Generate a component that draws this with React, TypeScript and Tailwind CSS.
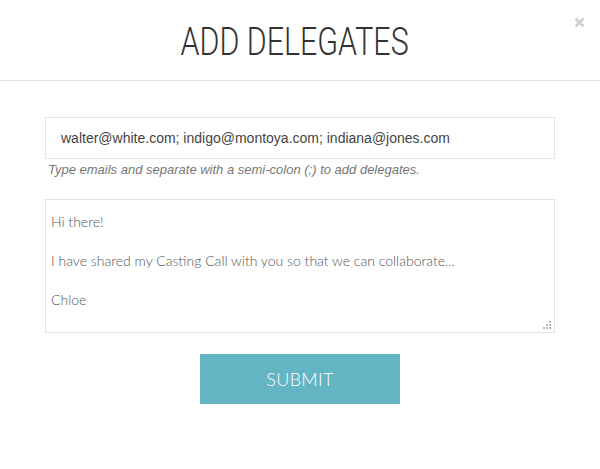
import React from "react";

export default function App() {
  const msg = "Hi there!\n\nI have shared my Casting Call with you so that we can collaborate...\n\nChloe";
  return (
    <div className="w-[600px] h-[469px] bg-white relative overflow-hidden">
      <div className="h-[81px] border-b border-[#e5e5e5] flex items-center justify-center">
        <h1
          className="text-[38px] font-light text-[#333] leading-none mt-[3px] mr-[10px] origin-center scale-x-[0.8]"
          style={{ fontFamily: "Roboto, 'Liberation Sans', sans-serif" }}
        >
          ADD DELEGATES
        </h1>
      </div>
      <button className="absolute left-[574px] top-[17px]">
        <svg width="11" height="11" viewBox="0 0 11 11">
          <path d="M1.5 1.5 L9.5 9.5 M9.5 1.5 L1.5 9.5" stroke="#cfcfcf" strokeWidth="2.6" />
        </svg>
      </button>
      <div className="px-[45px] pt-[36px] flex flex-col">
        <div
          className="h-[42px] border border-[#e3e3e3] flex items-center px-[15px] text-[14px] text-[#444]"
          style={{ fontFamily: "'Liberation Sans', Arial, sans-serif" }}
        >
          walter@white.com; indigo@montoya.com; indiana@jones.com
        </div>
        <p
          className="mt-[2px] ml-[3px] text-[13px] italic text-[#777] leading-[18px]"
          style={{ fontFamily: "'Liberation Sans', Arial, sans-serif" }}
        >
          Type emails and separate with a semi-colon (;) to add delegates.
        </p>
        <div className="relative mt-[20px]">
          <textarea
            readOnly
            value={msg}
            className="block w-full h-[134px] border border-[#e3e3e3] resize-none outline-none pl-[5px] pt-[12px] text-[14px] leading-[19.5px] text-[#555] font-light"
            style={{ fontFamily: "Lato, sans-serif" }}
          />
          <svg className="absolute right-[3px] bottom-[3px]" width="9" height="9" viewBox="0 0 9 9">
            <rect x="6" y="0" width="2" height="2" fill="#bbb" />
            <rect x="3" y="3" width="2" height="2" fill="#bbb" />
            <rect x="6" y="3" width="2" height="2" fill="#bbb" />
            <rect x="0" y="6" width="2" height="2" fill="#bbb" />
            <rect x="3" y="6" width="2" height="2" fill="#bbb" />
            <rect x="6" y="6" width="2" height="2" fill="#bbb" />
          </svg>
        </div>
        <div className="flex justify-center mt-[21px]">
          <button
            className="w-[200px] h-[50px] bg-[#63b5c3] text-white text-[18px] font-light tracking-[0.3px]"
            style={{ fontFamily: "Lato, sans-serif" }}
          >
            SUBMIT
          </button>
        </div>
      </div>
    </div>
  );
}
